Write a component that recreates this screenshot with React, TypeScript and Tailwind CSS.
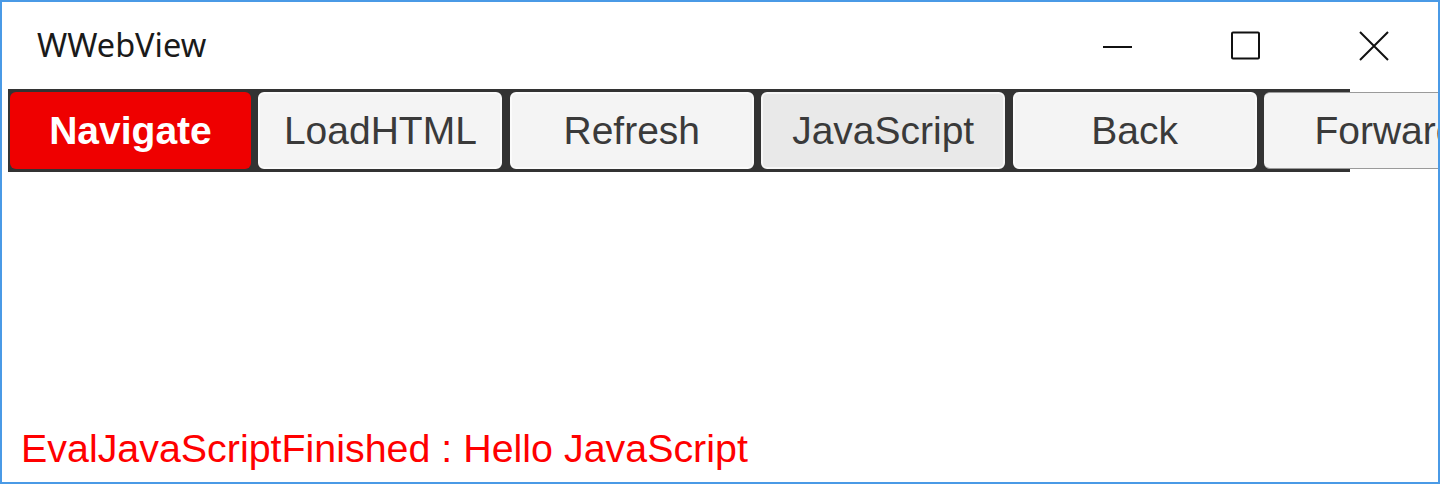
import React from 'react';

const buttons = [
  { label: 'Navigate', kind: 'primary' },
  { label: 'LoadHTML', kind: 'plain' },
  { label: 'Refresh', kind: 'plain' },
  { label: 'JavaScript', kind: 'pressed' },
  { label: 'Back', kind: 'plain' },
  { label: 'Forward', kind: 'last' },
];

const buttonClass: Record<string, string> = {
  primary: 'w-[241px] bg-[#ef0000] text-white font-bold',
  plain: 'w-[244px] bg-[#f4f4f4] text-[#3a3a3a] border-2 border-[#fbfbfb]',
  pressed: 'w-[244px] bg-[#e9e9e9] text-[#3a3a3a] border-2 border-[#f7f7f7]',
  last: 'w-[244px] bg-[#f4f4f4] text-[#3a3a3a] border-y border-[#9a9a9a]',
};

export default function App() {
  return (
    <main className="w-[1440px] h-[484px] border-2 border-[#4a9ae6] bg-white flex flex-col overflow-hidden font-['Liberation_Sans',Arial,sans-serif]">
      <header className="h-[87px] flex items-center shrink-0">
        <span className="pl-[35px] grow text-[32.5px] text-[#1a1a1a] font-['Noto_Sans',sans-serif]">WWebView</span>
        <div className="flex h-full">
          <div className="w-[128px] flex items-center justify-center">
            <svg width="30" height="30" viewBox="0 0 30 30">
              <line x1="0" y1="16" x2="29" y2="16" stroke="#111" strokeWidth="2" />
            </svg>
          </div>
          <div className="w-[128px] flex items-center justify-center">
            <svg width="30" height="30" viewBox="0 0 30 30">
              <rect x="1" y="1.5" width="27" height="26" fill="none" stroke="#111" strokeWidth="2" rx="1" />
            </svg>
          </div>
          <div className="w-[128px] flex items-center justify-center">
            <svg width="30" height="30" viewBox="0 0 30 30">
              <path d="M1 1 L29 29 M29 1 L1 29" stroke="#111" strokeWidth="2" />
            </svg>
          </div>
        </div>
      </header>

      <div className="ml-[6px] overflow-hidden shrink-0">
        <div className="w-[1342px] h-[83px] bg-[#333] flex gap-[7.4px] px-[2px] py-[3px]">
          {buttons.map((b) => (
            <button
              key={b.label}
              type="button"
              className={`shrink-0 h-full rounded-[6px] flex items-center justify-center text-[39px] leading-none ${buttonClass[b.kind]}`}
            >
              {b.label}
            </button>
          ))}
        </div>
      </div>

      <div className="grow" />

      <p className="pl-[19px] pb-[11px] text-[39.4px] leading-[45px] text-[#ff0000]">
        EvalJavaScriptFinished : Hello JavaScript
      </p>
    </main>
  );
}
